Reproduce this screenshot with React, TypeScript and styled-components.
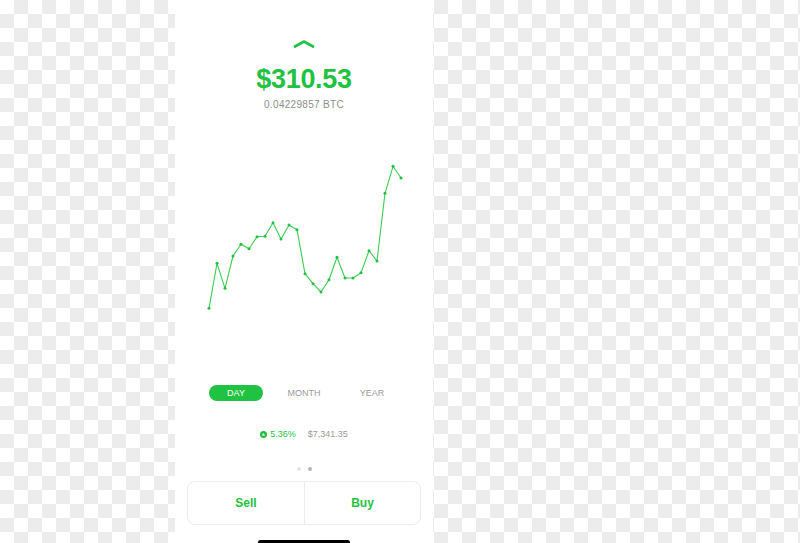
import * as React from 'react';
import styled, { createGlobalStyle } from 'styled-components';

const green = '#1fc241';

const GlobalStyle = createGlobalStyle`
  html, body {
    margin: 0;
    height: 100%;
    overflow: hidden;
  }
  body {
    background-color: #fff;
    background-image: repeating-conic-gradient(#ececec 0 25%, #fff 0 50%);
    background-size: 28px 28px;
    font-family: 'Liberation Sans', Arial, sans-serif;
  }
`;

const Page = styled.div`
  display: flex;
  height: 543px;
  overflow: hidden;
`;

const Phone = styled.div`
  margin-left: 175px;
  width: 258px;
  height: 543px;
  overflow: hidden;
  background: #fff;
  display: flex;
  flex-direction: column;
  align-items: center;
  padding-top: 39px;
  box-sizing: border-box;

  & > * {
    flex-shrink: 0;
  }
`;

const Chevron = styled.svg`
  display: block;
  width: 26px;
  height: 10px;
`;

const Price = styled.div`
  margin-top: 14px;
  font-size: 27px;
  line-height: 32px;
  font-weight: 700;
  color: ${green};
  letter-spacing: -0.3px;
`;

const Sub = styled.div`
  margin-top: 4px;
  font-size: 10px;
  line-height: 12px;
  color: #8d8d8d;
  letter-spacing: 0.3px;
`;

const Chart = styled.svg`
  display: block;
  margin-top: 29px;
  width: 258px;
  height: 230px;
`;

const Tabs = styled.div`
  margin-top: 15px;
  display: grid;
  grid-template-columns: repeat(3, 54px);
  column-gap: 14px;
`;

const Tab = styled.div<{ $active?: boolean }>`
  height: 16px;
  border-radius: 8px;
  display: flex;
  align-items: center;
  justify-content: center;
  font-size: 9px;
  color: ${({ $active }) => ($active ? '#fff' : '#9a9a9a')};
  background: ${({ $active }) => ($active ? green : 'transparent')};
`;

const Stats = styled.div`
  margin-top: 27px;
  display: flex;
  align-items: center;
  height: 12px;
  font-size: 9px;
`;

const Change = styled.span`
  display: flex;
  align-items: center;
  gap: 3px;
  color: ${green};
`;

const Total = styled.span`
  margin-left: 12px;
  color: #9a9a9a;
`;

const Dots = styled.div`
  margin-top: 27px;
  display: flex;
  gap: 7px;
`;

const Dot = styled.span<{ $on?: boolean }>`
  width: 4px;
  height: 4px;
  border-radius: 50%;
  background: ${({ $on }) => ($on ? '#b5b5b5' : '#e4e4e4')};
`;

const Actions = styled.div`
  margin-top: 10px;
  width: 234px;
  height: 44px;
  box-sizing: border-box;
  border: 1px solid #ececec;
  border-radius: 8px;
  display: grid;
  grid-template-columns: 1fr 1fr;
`;

const Action = styled.div`
  display: flex;
  align-items: center;
  justify-content: center;
  font-size: 12px;
  font-weight: 700;
  color: ${green};
  & + & {
    border-left: 1px solid #ececec;
  }
`;

const HomeBar = styled.div`
  margin-top: 15px;
  width: 92px;
  height: 5px;
  border-radius: 3px;
  background: #000;
`;

const prices = [
  308.3, 263.3, 288.3, 256, 244.3, 248.7, 236.7, 236.3, 222.7, 239, 225, 229.7, 273.7,
  283.7, 292, 279.7, 257.3, 278, 278, 272.7, 250.7, 261, 193.3, 166.3, 178,
];

const points = prices.map((y, i) => [34 + i * 8, y - 140] as const);

export default function App() {
  return (
    <Page>
      <GlobalStyle />
      <Phone>
        <Chevron viewBox="0 0 26 10">
          <path d="M3 8 L13 2.5 L23 8" fill="none" stroke={green} strokeWidth="2.8" strokeLinejoin="miter" />
        </Chevron>
        <Price>$310.53</Price>
        <Sub>0.04229857 BTC</Sub>
        <Chart viewBox="0 0 258 230">
          <polyline
            points={points.map(([x, y]) => `${x},${y}`).join(' ')}
            fill="none"
            stroke="#3ccc56"
            strokeWidth="1.1"
            strokeLinejoin="round"
          />
          {points.map(([x, y], i) => (
            <circle key={i} cx={x} cy={y} r="1.5" fill={green} />
          ))}
        </Chart>
        <Tabs>
          <Tab $active>DAY</Tab>
          <Tab>MONTH</Tab>
          <Tab>YEAR</Tab>
        </Tabs>
        <Stats>
          <Change>
            <svg width="7" height="7" viewBox="0 0 7 7">
              <circle cx="3.5" cy="3.5" r="3.5" fill={green} />
              <path d="M3.5 1.9 L5.1 4.6 L1.9 4.6 Z" fill="#fff" />
            </svg>
            5.36%
          </Change>
          <Total>$7,341.35</Total>
        </Stats>
        <Dots>
          <Dot />
          <Dot $on />
        </Dots>
        <Actions>
          <Action>Sell</Action>
          <Action>Buy</Action>
        </Actions>
        <HomeBar />
      </Phone>
    </Page>
  );
}
